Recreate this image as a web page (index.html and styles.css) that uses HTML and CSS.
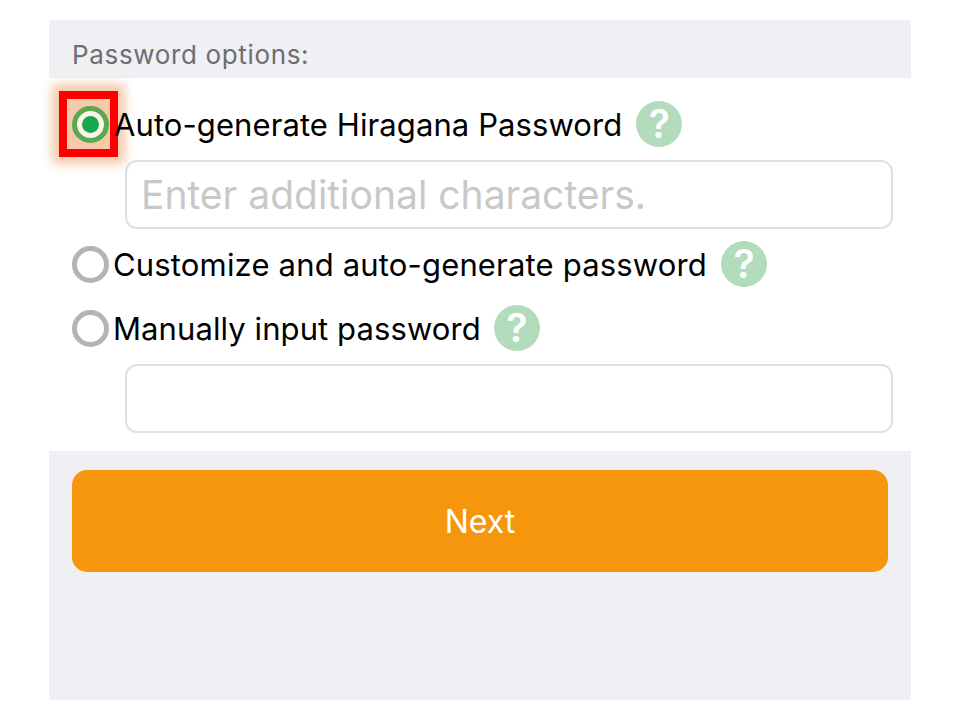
FILE: index.html
```html
<!DOCTYPE html>
<html lang="en">
<head>
<meta charset="utf-8">
<title>Password options</title>
<link rel="stylesheet" href="styles.css">
</head>
<body>
<main class="panel">
  <header class="section-head">Password options:</header>
  <section class="options">
    <div class="option option-first">
      <span class="radio radio-on"></span>
      <span class="label">Auto-generate Hiragana Password</span>
      <span class="help">?</span>
      <span class="highlight"></span>
    </div>
    <div class="field field-a"><span class="placeholder">Enter additional characters.</span></div>
    <div class="option option-second">
      <span class="radio"></span>
      <span class="label">Customize and auto-generate password</span>
      <span class="help">?</span>
    </div>
    <div class="option option-third">
      <span class="radio"></span>
      <span class="label">Manually input password</span>
      <span class="help">?</span>
    </div>
    <div class="field field-b"></div>
  </section>
  <section class="actions">
    <button class="next" type="button">Next</button>
  </section>
</main>
</body>
</html>
```
FILE: styles.css
```css
* { box-sizing: border-box; }
html, body { margin: 0; background: #fff; }
body { padding: 20px 49px; height: 720px; font-family: Inter, "Liberation Sans", sans-serif; }
.panel { width: 862px; height: 680px; display: flex; flex-direction: column; background: #efeff4; }
.section-head { height: 58px; padding: 19px 0 0 23px; font-size: 26px; line-height: 32px; color: #6d6d72; letter-spacing: 0.65px; }
.options { background: #fff; padding: 23px 18px 18px 23px; display: flex; flex-direction: column; }
.option { position: relative; height: 46px; display: flex; align-items: center; }
.option-second { margin-top: 12px; }
.option-third { margin-top: 18px; }
.radio { width: 37px; height: 37px; flex: none; border-radius: 50%; border: 5px solid #b4b4b4; background: #fff; margin-right: 4px; position: relative; z-index: 1; }
.radio-on { border-color: #5aa94e; background: #fdf3ea; margin-right: 5px; }
.radio-on::after { content: ""; position: absolute; left: 50%; top: 50%; width: 17px; height: 17px; margin: -8.5px 0 0 -8.5px; border-radius: 50%; background: #16a84f; }
.label { font-size: 31px; line-height: 42px; padding-top: 2px; color: #000; white-space: nowrap; letter-spacing: 0.09px; position: relative; z-index: 1; }
.option-second .label { letter-spacing: 0.17px; }
.help { width: 46px; height: 46px; flex: none; margin-left: 14px; border-radius: 50%; background: #b3dcbd; color: #fff; font-size: 39px; font-weight: 600; line-height: 46px; text-align: center; }
.option-third .help { margin-left: 13px; }
.highlight { position: absolute; left: -13px; top: -10px; width: 59px; height: 66px; border: 8px solid #ff0000; background: #f7c9ab; box-shadow: 0 0 10px 7px #f7c9ab; }
.field { height: 69px; margin: 13px 0 0 53px; border: 2px solid #e0e0e0; border-radius: 12px; background: #fff; padding: 0 15px; display: flex; align-items: center; }
.field-a + .option { margin-top: 12px; }
.placeholder { font-size: 39px; color: #c8c8c8; white-space: nowrap; margin-left: -1px; }
.actions { flex: 1; padding: 19px 23px 0; }
.next { display: block; width: 816px; height: 102px; border: 0; border-radius: 15px; background: #f5960d; color: #fff; font-family: inherit; font-size: 32px; padding: 0; }
```
